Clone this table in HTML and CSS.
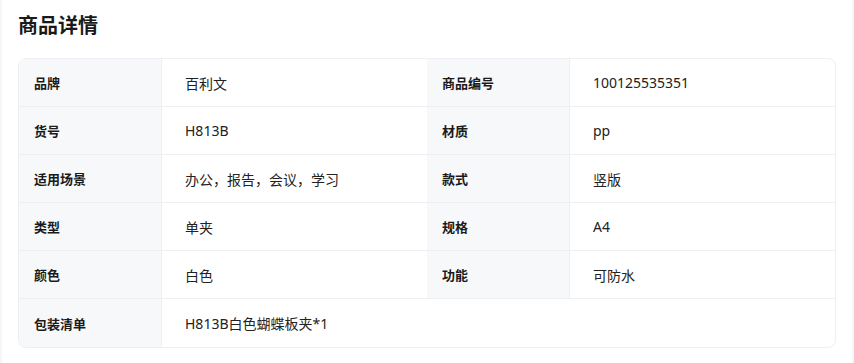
FILE: index.html
```html
<!DOCTYPE html>
<html lang="zh-CN">
<head>
<meta charset="utf-8">
<link rel="stylesheet" href="styles.css">
</head>
<body>
<div class="page">
  <h2 class="title">商品详情</h2>
  <div class="card">
    <div class="lbl">品牌</div><div class="val">百利文</div>
    <div class="lbl">商品编号</div><div class="val">100125535351</div>
    <div class="lbl">货号</div><div class="val">H813B</div>
    <div class="lbl">材质</div><div class="val">pp</div>
    <div class="lbl">适用场景</div><div class="val">办公，报告，会议，学习</div>
    <div class="lbl">款式</div><div class="val">竖版</div>
    <div class="lbl">类型</div><div class="val">单夹</div>
    <div class="lbl">规格</div><div class="val">A4</div>
    <div class="lbl">颜色</div><div class="val">白色</div>
    <div class="lbl">功能</div><div class="val">可防水</div>
    <div class="lbl last">包装清单</div><div class="val wide last">H813B白色蝴蝶板夹*1</div>
  </div>
</div>
</body>
</html>
```
FILE: styles.css
```css
html, body {
  margin: 0;
  padding: 0;
  background: #f6f6fa;
}
body {
  font-family: "Noto Sans", "Noto Sans CJK SC", sans-serif;
  color: #1f2329;
}
.page {
  background: #ffffff;
  margin: 0 2px 0 2px;
  height: 363px;
  padding: 12px 16px 0 16px;
  box-sizing: border-box;
}
.title {
  margin: 0;
  font-size: 20px;
  font-weight: 700;
  line-height: 28px;
  height: 46px;
  color: #1a1a1a;
}
.card {
  width: 818px;
  border: 1px solid #eeeff2;
  border-radius: 8px;
  overflow: hidden;
  display: grid;
  grid-template-columns: 143px 265px 143px 1fr;
  box-sizing: border-box;
}
.lbl, .val {
  height: 48px;
  display: flex;
  align-items: center;
  border-bottom: 1px solid #eeeff2;
  box-sizing: border-box;
  font-size: 13px;
}
.lbl {
  background: #f7f8fa;
  font-weight: 700;
  padding-left: 15px;
  border-right: 1px solid #eeeff2;
  color: #1a1a1a;
}
.val {
  padding-left: 23px;
  font-size: 14px;
  color: #222;
}
.wide {
  grid-column: 2 / 5;
}
.last {
  border-bottom: none;
}
```
